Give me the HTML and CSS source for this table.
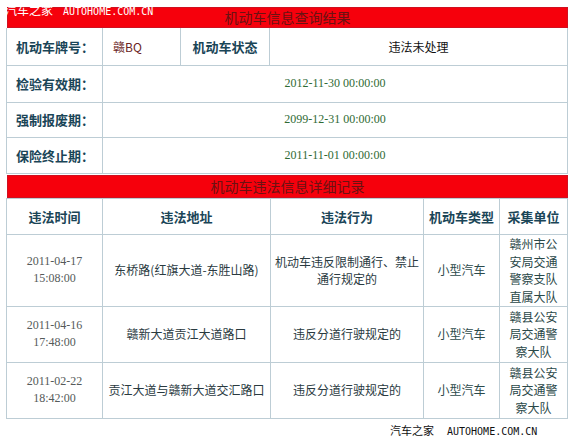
FILE: index.html
```html
<!DOCTYPE html>
<html lang="zh">
<head>
<meta charset="utf-8">
<title>机动车信息查询结果</title>
<link rel="stylesheet" href="styles.css">
</head>
<body>
<div class="page">
  <div class="mark mark-top"><span class="mk-cn">汽车之家</span><span class="mk-en">AUTOHOME.COM.CN</span></div>
  <div class="bar bar-first">机动车信息查询结果</div>
  <table class="info">
    <colgroup><col class="c1"><col class="c2"><col class="c3"><col class="c4"></colgroup>
    <tr class="r-a">
      <th class="lab">机动车牌号：</th>
      <td class="plate">赣BQ</td>
      <th class="mid">机动车状态</th>
      <td class="status">违法未处理</td>
    </tr>
    <tr class="r-a">
      <th class="lab">检验有效期：</th>
      <td class="date" colspan="3">2012-11-30 00:00:00</td>
    </tr>
    <tr class="r-b">
      <th class="lab">强制报废期：</th>
      <td class="date" colspan="3">2099-12-31 00:00:00</td>
    </tr>
    <tr class="r-c">
      <th class="lab">保险终止期：</th>
      <td class="date" colspan="3">2011-11-01 00:00:00</td>
    </tr>
  </table>
  <div class="bar bar-second">机动车违法信息详细记录</div>
  <table class="detail">
    <colgroup><col class="d1"><col class="d2"><col class="d3"><col class="d4"><col class="d5"></colgroup>
    <tr class="head">
      <th>违法时间</th><th>违法地址</th><th>违法行为</th><th>机动车类型</th><th>采集单位</th>
    </tr>
    <tr class="row-tall">
      <td class="time">2011-04-17<br>15:08:00</td>
      <td class="addr">东桥路(红旗大道-东胜山路)</td>
      <td class="act">机动车违反限制通行、禁止<br>通行规定的</td>
      <td class="type">小型汽车</td>
      <td class="unit">赣州市公<br>安局交通<br>警察支队<br>直属大队</td>
    </tr>
    <tr class="row">
      <td class="time">2011-04-16<br>17:48:00</td>
      <td class="addr">赣新大道贡江大道路口</td>
      <td class="act">违反分道行驶规定的</td>
      <td class="type">小型汽车</td>
      <td class="unit">赣县公安<br>局交通警<br>察大队</td>
    </tr>
    <tr class="row">
      <td class="time">2011-02-22<br>18:42:00</td>
      <td class="addr">贡江大道与赣新大道交汇路口</td>
      <td class="act">违反分道行驶规定的</td>
      <td class="type">小型汽车</td>
      <td class="unit">赣县公安<br>局交通警<br>察大队</td>
    </tr>
  </table>
  <div class="mark-bottom"><span class="mk-cn">汽车之家</span><span class="mk-en">AUTOHOME.COM.CN</span></div>
  <div class="rule"></div>
</div>
</body>
</html>
```

FILE: styles.css
```css
html, body {
  margin: 0;
  padding: 0;
  background: #ffffff;
}
body {
  width: 574px;
  height: 440px;
  overflow: hidden;
  font-family: "Noto Sans CJK SC", "Noto Sans", sans-serif;
  font-size: 12px;
  color: #333333;
}
.page {
  position: relative;
  padding: 7px 0 0 6px;
}
.mark {
  position: absolute;
  top: 3px;
  left: 5px;
  color: #ffffff;
  white-space: nowrap;
  line-height: 14px;
  z-index: 2;
}
.mk-cn {
  font-family: "Noto Sans CJK SC", sans-serif;
  font-size: 11px;
}
.mark-top .mk-cn {
  font-size: 12px;
}
.mk-en {
  font-family: "DejaVu Sans Mono", monospace;
  font-size: 10px;
}
.mark-top .mk-en {
  margin-left: 10px;
}
.bar {
  box-sizing: border-box;
  width: 561px;
  margin-left: 1px;
  background: #f6000c;
  box-shadow: inset 0 0 0 1px #d01020;
  color: #6a1212;
  font-size: 14px;
  text-align: center;
}
.bar-first {
  height: 21px;
  line-height: 21px;
}
.bar-second {
  height: 23px;
  line-height: 23px;
  margin-top: 1px;
}
table {
  border-collapse: collapse;
  table-layout: fixed;
  width: 561px;
}
td, th {
  border: 1px solid #bdcdd5;
  padding: 0;
}
th {
  font-weight: bold;
  font-size: 13px;
  color: #1a4557;
}
.info tr:first-child td, .info tr:first-child th {
  border-top: none;
}
.c1 { width: 96px; }
.c2 { width: 78px; }
.c3 { width: 89px; }
.c4 { width: 298px; }
.r-a { height: 37px; }
.r-b { height: 35px; }
.r-c { height: 36px; }
.lab {
  text-align: left;
  padding-left: 9px;
}
.mid { text-align: center; }
.plate {
  padding-left: 10px;
  color: #6b2424;
}
.status {
  text-align: center;
  color: #111111;
}
.date {
  text-align: center;
  font-family: "Liberation Serif", serif;
  font-size: 12px;
  color: #2f6a34;
}
.d1 { width: 96px; }
.d2 { width: 168px; }
.d3 { width: 153px; }
.d4 { width: 76px; }
.d5 { width: 68px; }
.detail td, .detail th {
  text-align: center;
}
.detail .head { height: 36px; }
.detail .row-tall { height: 72px; }
.detail .row { height: 56px; }
.detail td {
  line-height: 17.5px;
}
.time {
  font-family: "Liberation Serif", serif;
  font-size: 12px;
  color: #555a5a;
}
.addr, .act {
  color: #2a3a3f;
}
.type {
  color: #2c4a4a;
}
.unit {
  color: #2a4848;
}
.mark-bottom {
  margin: 4px 0 0 384px;
  height: 14px;
  line-height: 14px;
  color: #111111;
  white-space: nowrap;
}
.mark-bottom .mk-en {
  margin-left: 13px;
}
.rule {
  margin-top: 3px;
  height: 2px;
  background: #3a3a3a;
  border-bottom: 1px solid #999999;
}
```
